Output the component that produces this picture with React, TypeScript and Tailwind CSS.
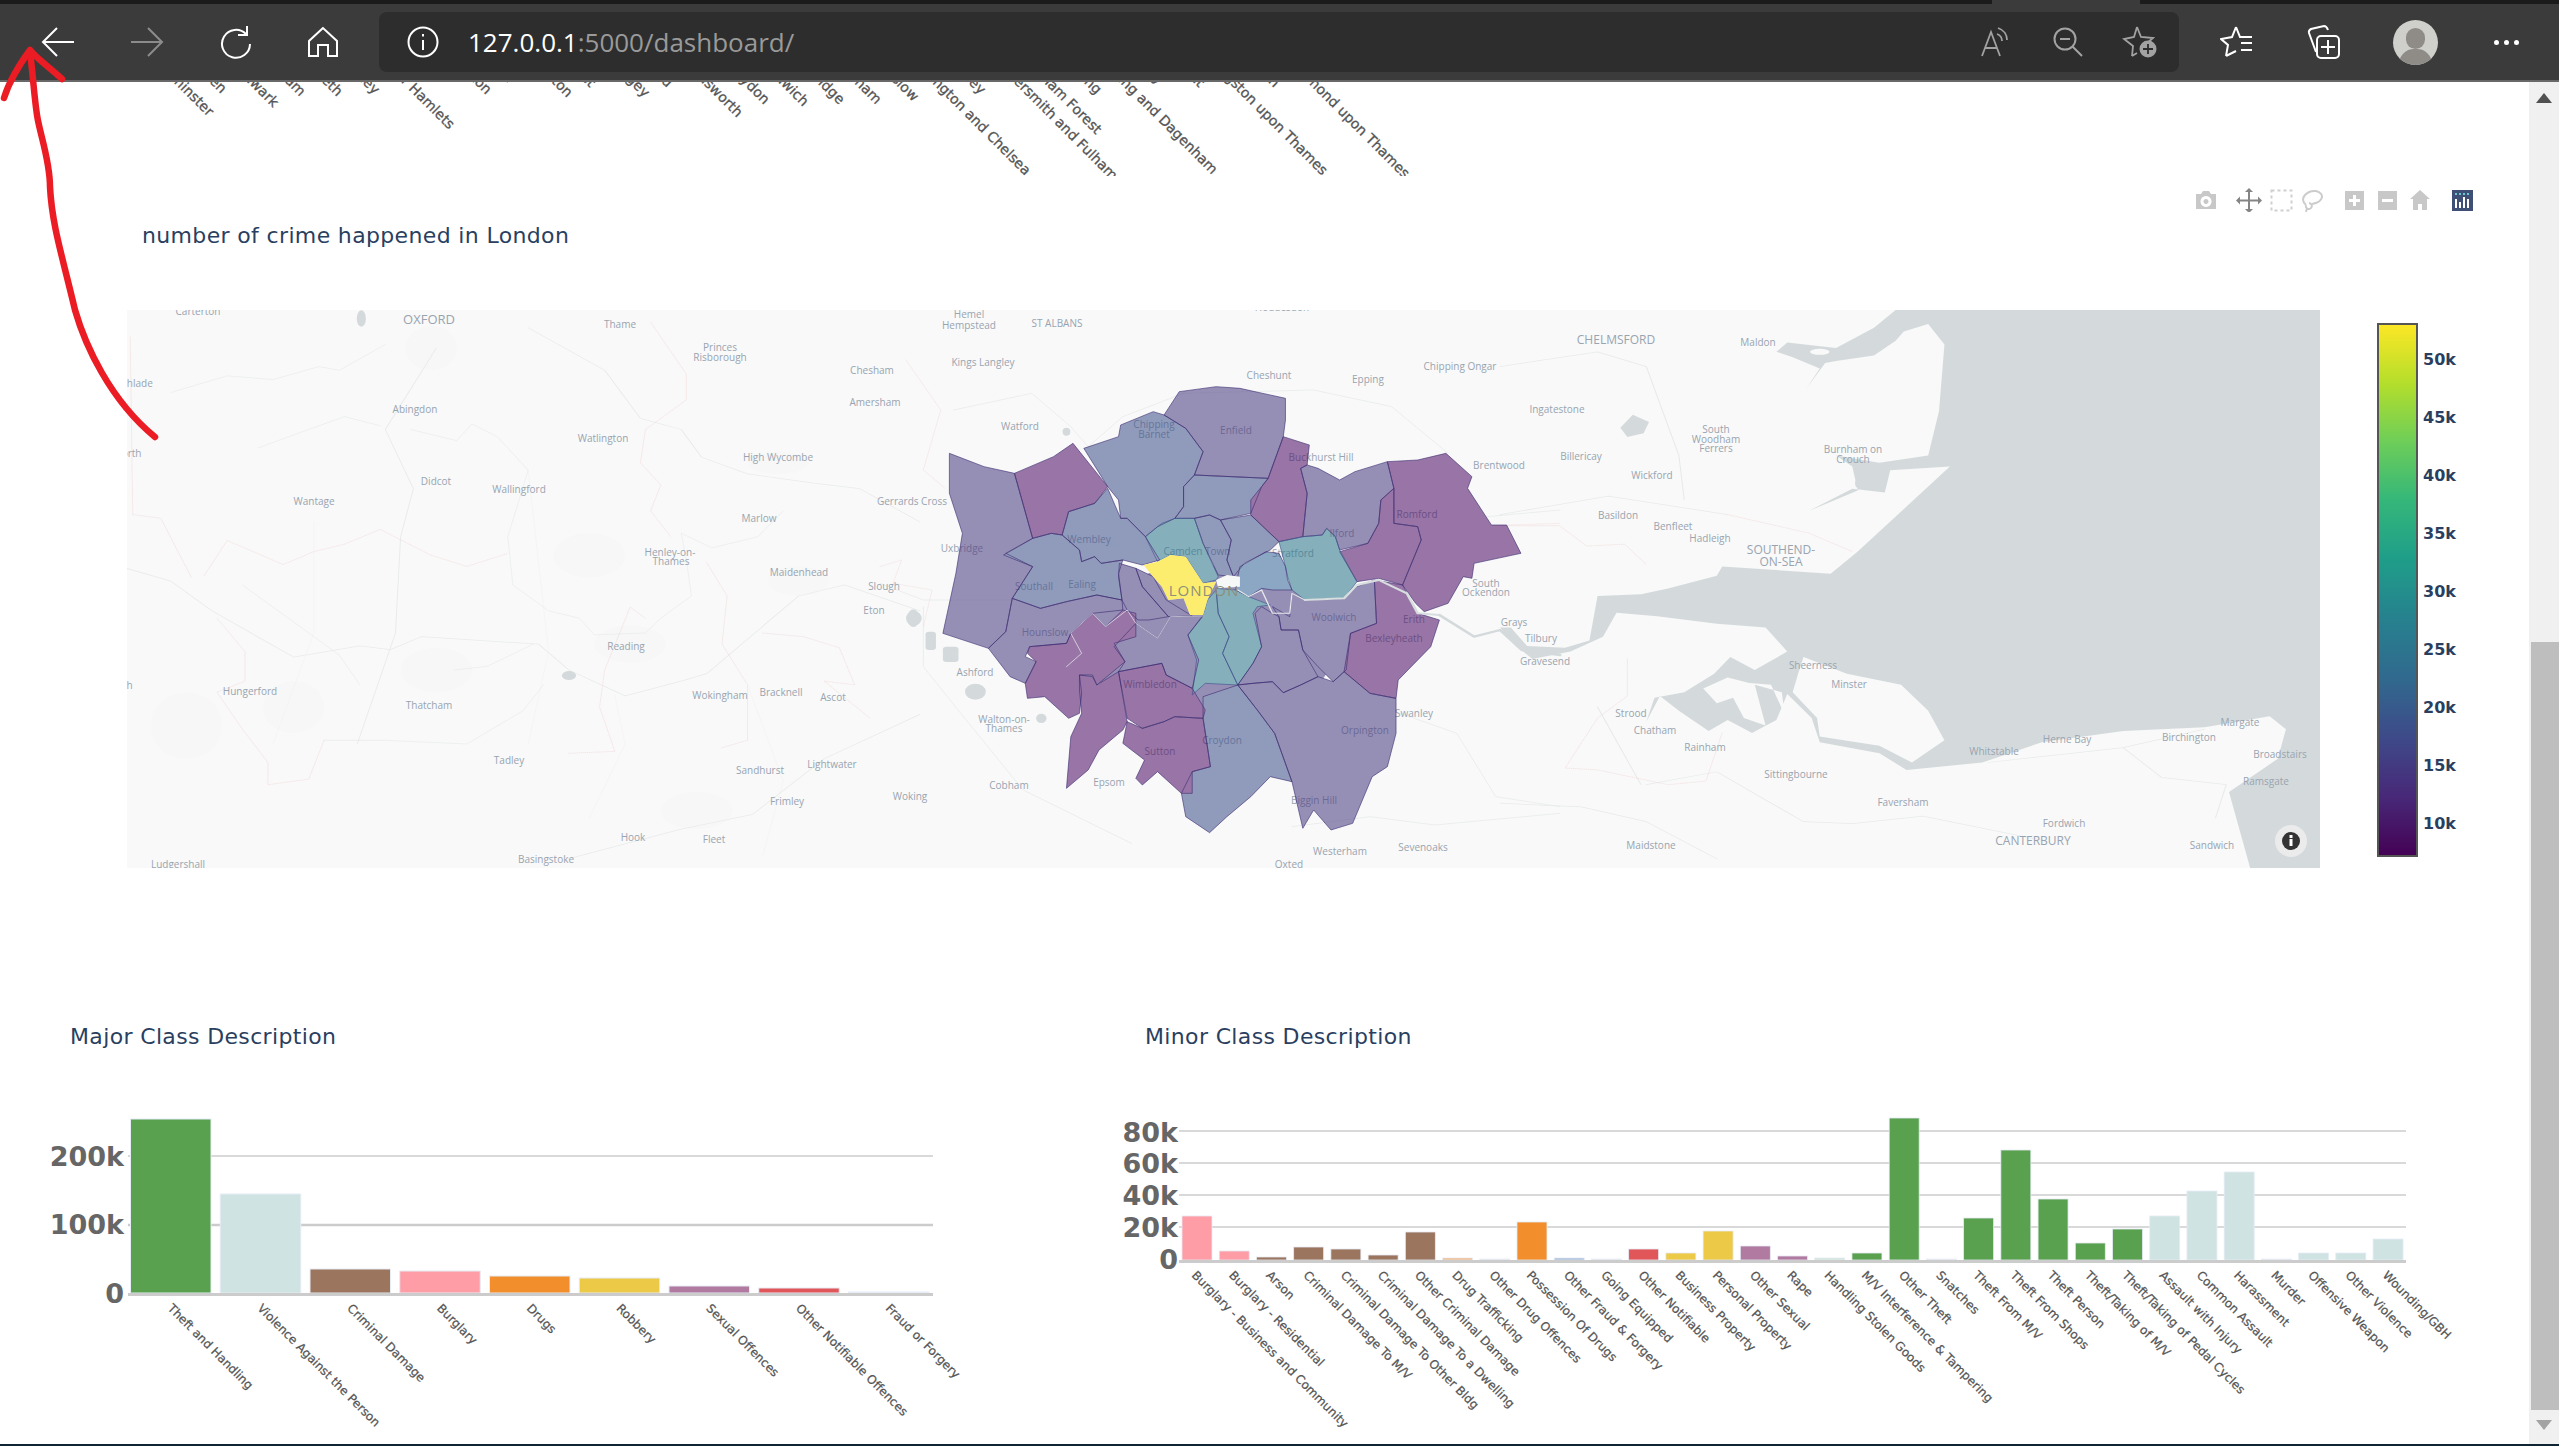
const sansFont = "DejaVu Sans, sans-serif";
const mapFont = "Open Sans, sans-serif";

const PURPLE = '#4a0a63';
const INDIGO = '#46397f';
const SLATE = '#3c4f8a';
const BLUE = '#34659a';
const TEAL = '#26748a';

// polygon points are in the coordinates of the London crop: x = 880 + X / 2.306, y = 360 + Y / 3
const boroughs: [string, string][] = [
    [INDIGO, '160,280 240,320 310,340 352,535 290,580 352,620 305,715 290,815 250,865 145,820 175,640 190,520 160,400'],
    [PURPLE, '310,340 400,290 445,250 525,380 495,430 435,455 420,525 395,520 352,535'],
    [SLATE, '470,265 550,230 555,195 630,155 655,165 705,205 745,275 725,345 700,380 700,440 680,475 640,500 612,530 570,475 555,475 550,420 525,380'],
    [INDIGO, '655,165 690,95 775,80 830,85 935,115 935,180 930,230 895,355 725,345 745,275 705,205'],
    [SLATE, '725,345 895,355 880,380 855,460 785,480 760,465 725,475 680,475 700,440 700,380'],
    [PURPLE, '930,230 990,255 985,315 970,325 985,400 975,530 920,545 855,465 855,420 880,380 895,355'],
    [INDIGO, '985,315 1010,325 1060,360 1095,335 1170,305 1185,385 1155,420 1150,490 1125,550 1060,570 1050,530 1030,505 1020,525 975,530 985,400 970,325'],
    [PURPLE, '1170,305 1240,300 1305,280 1365,350 1355,385 1410,495 1445,495 1478,580 1370,610 1365,655 1345,650 1310,730 1255,755 1235,730 1205,675 1248,540 1240,500 1185,490 1185,385'],
    [PURPLE, '1185,490 1240,500 1248,540 1205,675 1150,655 1100,665 1060,575 1125,550 1150,490 1155,420 1185,385'],
    [TEAL, '920,545 975,530 1020,525 1030,505 1050,530 1060,570 1100,665 1070,715 980,720 950,690 940,650 935,620'],
    [SLATE, '785,480 855,465 920,545 900,570 840,610 815,650 800,600 810,540'],
    [BLUE, '830,620 890,575 920,580 935,620 940,660 950,690 905,690 880,685 850,710 820,690 825,650'],
    [SLATE, '725,475 760,465 785,480 810,540 800,600 815,650 780,645 745,550'],
    [TEAL, '612,530 650,490 680,475 725,475 745,550 780,650 775,660 745,670 705,590 670,585 640,605'],
    [SLATE, '420,525 435,455 495,430 525,385 555,475 570,475 612,530 645,600 605,615 560,600 510,610 495,590 465,605 460,570'],
    [SLATE, '285,585 352,535 395,520 420,525 460,570 465,605 495,590 510,610 560,600 550,640 558,720 500,705 430,725 370,745 305,715 352,620'],
    [INDIGO, '305,715 370,745 430,725 500,705 558,720 560,750 490,760 440,820 430,850 345,860 335,890 360,905 335,970 300,950 250,865 290,815'],
    [INDIGO, '552,610 590,625 605,680 665,770 620,780 595,780 570,750 558,720 550,650'],
    [INDIGO, '590,625 630,650 660,720 720,768 665,770 605,680'],
    [TEAL, '775,685 820,690 850,710 900,735 870,740 860,760 880,860 860,910 825,975 790,880 805,830 780,760'],
    [TEAL, '755,720 775,690 780,760 805,830 790,880 825,975 750,970 720,1005 730,900 710,825 745,765'],
    [INDIGO, '540,860 590,790 640,835 670,770 745,768 710,825 735,900 720,985 660,945 650,910 550,935 565,905'],
    [INDIGO, '865,760 880,740 905,760 920,770 925,810 965,810 975,870 1010,950 970,975 930,998 905,965 860,970 825,975 860,910 880,860'],
    [INDIGO, '905,740 945,770 950,700 980,720 1070,715 1100,680 1140,660 1145,790 1085,820 1075,930 1045,965 1010,920 975,870 965,810 925,810 920,770'],
    [PURPLE, '1140,660 1205,675 1240,760 1290,780 1270,860 1195,960 1190,1015 1130,1000 1070,935 1085,820 1145,790'],
    [INDIGO, '825,975 860,970 905,965 930,998 970,975 1010,950 1045,965 1070,935 1130,1000 1190,1015 1190,1120 1170,1220 1135,1250 1090,1390 1040,1410 1000,1350 975,1405 950,1265 910,1120 870,1050'],
    [SLATE, '745,1010 825,975 870,1050 910,1120 950,1265 900,1250 855,1310 800,1370 760,1418 705,1370 695,1300 720,1235 762,1220 745,1075'],
    [PURPLE, '550,935 650,910 660,945 720,985 750,1050 745,1075 680,1070 655,1085 605,1105 570,1075'],
    [PURPLE, '570,1085 605,1105 655,1085 680,1070 745,1075 762,1220 720,1235 720,1300 695,1300 640,1235 605,1275 590,1255 610,1200 560,1150'],
    [PURPLE, '460,945 490,950 500,975 550,935 570,1085 560,1110 505,1170 480,1230 430,1285 440,1130 465,1060 460,990'],
    [PURPLE, '340,880 345,860 430,850 440,820 490,760 520,800 560,750 590,760 590,830 540,850 565,905 500,975 490,945 460,945 465,1000 460,1060 435,1075 380,1010 340,1015 335,970 360,905'],
];

const WESTMINSTER = '608,615 640,605 670,585 705,590 745,670 775,665 755,720 745,765 715,765 700,715 665,720 650,680 630,650';

const towns: [string, number, number, number?][] = [
    ['Hoddesdon', 1282, 311], ['Carterton', 198, 315], ['OXFORD', 429, 324, 13], ['Thame', 620, 328], ['Princes', 720, 351], ['Risborough', 720, 361],
    ['Hemel', 969, 318], ['Hempstead', 969, 329], ['ST ALBANS', 1057, 327], ['Chesham', 872, 374], ['Amersham', 875, 406], ['Abingdon', 415, 413],
    ['Watlington', 603, 442], ['High Wycombe', 778, 461], ['Didcot', 436, 485], ['Wallingford', 519, 493], ['Wantage', 314, 505], ['Marlow', 759, 522],
    ['Gerrards Cross', 912, 505], ['Henley-on-', 670, 556], ['Thames', 671, 565], ['Maidenhead', 799, 576], ['Slough', 884, 590], ['Eton', 874, 614],
    ['Reading', 626, 650], ['Wokingham', 720, 699], ['Bracknell', 781, 696], ['Ascot', 833, 701], ['Hungerford', 250, 695], ['Thatcham', 429, 709],
    ['Tadley', 509, 764], ['Sandhurst', 760, 774], ['Lightwater', 832, 768], ['Frimley', 787, 805], ['Woking', 910, 800], ['Hook', 633, 841],
    ['Fleet', 714, 843], ['Basingstoke', 546, 863], ['Ludgershall', 178, 868], ['Lechlade', 132, 387], ['Highworth', 117, 457], ['Marlborough', 102, 689],
    ['Kings Langley', 983, 366], ['Cheshunt', 1269, 379], ['Epping', 1368, 383], ['Chipping Ongar', 1460, 370], ['Ingatestone', 1557, 413], ['Watford', 1020, 430],
    ['Chipping', 1154, 428], ['Barnet', 1154, 438], ['Enfield', 1236, 434], ['Buckhurst Hill', 1321, 461], ['Brentwood', 1499, 469], ['Romford', 1417, 518],
    ['Wembley', 1089, 543], ['Ilford', 1342, 537], ['Uxbridge', 962, 552], ['Camden Town', 1197, 555], ['Stratford', 1293, 557], ['South', 1486, 587],
    ['Ockendon', 1486, 596], ['Southall', 1034, 590], ['Ealing', 1082, 588], ['Woolwich', 1334, 621], ['Erith', 1414, 623],
    ['Grays', 1514, 626], ['Tilbury', 1541, 642], ['Hounslow', 1045, 636], ['Bexleyheath', 1394, 642], ['Gravesend', 1545, 665], ['Ashford', 975, 676],
    ['Wimbledon', 1150, 688], ['Swanley', 1414, 717], ['Walton-on-', 1004, 723], ['Thames', 1004, 732], ['Croydon', 1222, 744], ['Orpington', 1365, 734],
    ['Sutton', 1160, 755], ['Cobham', 1009, 789], ['Epsom', 1109, 786], ['Biggin Hill', 1314, 804], ['Sevenoaks', 1423, 851], ['Westerham', 1340, 855],
    ['Oxted', 1289, 868], ['CHELMSFORD', 1616, 344, 12], ['Maldon', 1758, 346], ['South', 1716, 433], ['Woodham', 1716, 443], ['Ferrers', 1716, 452],
    ['Burnham on', 1853, 453], ['Crouch', 1853, 463], ['Billericay', 1581, 460], ['Wickford', 1652, 479], ['Basildon', 1618, 519], ['Benfleet', 1673, 530],
    ['Hadleigh', 1710, 542], ['SOUTHEND-', 1781, 554, 12], ['ON-SEA', 1781, 566, 12], ['Sheerness', 1813, 669], ['Minster', 1849, 688], ['Strood', 1631, 717],
    ['Chatham', 1655, 734], ['Rainham', 1705, 751], ['Margate', 2240, 726], ['Herne Bay', 2067, 743], ['Birchington', 2189, 741], ['Whitstable', 1994, 755],
    ['Broadstairs', 2280, 758], ['Sittingbourne', 1796, 778], ['Ramsgate', 2266, 785], ['Faversham', 1903, 806], ['Fordwich', 2064, 827], ['Maidstone', 1651, 849],
    ['CANTERBURY', 2033, 845, 12], ['Sandwich', 2212, 849],
];

const GREEN = '#59a14f';
const PALE = '#cfe4e2';
const PINK = '#ff9da7';
const BROWN = '#9c755f';
const ORANGE = '#f28e2b';
const YELLOW = '#edc948';
const MAUVE = '#b07aa1';
const RED = '#e15759';

const majorBars: [string, string, number][] = [
    ['Theft and Handling', GREEN, 1119],
    ['Violence Against the Person', PALE, 1194],
    ['Criminal Damage', BROWN, 1269],
    ['Burglary', PINK, 1271],
    ['Drugs', ORANGE, 1276],
    ['Robbery', YELLOW, 1278],
    ['Sexual Offences', MAUVE, 1286],
    ['Other Notifiable Offences', RED, 1288],
    ['Fraud or Forgery', '#dfe6ef', 1292],
];

const minorBars: [string, string, number][] = [
    ['Burglary - Business and Community', PINK, 1216],
    ['Burglary - Residential', PINK, 1251],
    ['Arson', BROWN, 1257],
    ['Criminal Damage To M/V', BROWN, 1247],
    ['Criminal Damage To Other Bldg', BROWN, 1249],
    ['Criminal Damage To a Dwelling', BROWN, 1255],
    ['Other Criminal Damage', BROWN, 1232],
    ['Drug Trafficking', '#f5b478', 1258],
    ['Other Drug Offences', '#e6e6e6', 1259],
    ['Possession Of Drugs', ORANGE, 1222],
    ['Other Fraud & Forgery', '#a0b8d8', 1258],
    ['Going Equipped', '#e6e6e6', 1259],
    ['Other Notifiable', RED, 1249],
    ['Business Property', YELLOW, 1253],
    ['Personal Property', YELLOW, 1231],
    ['Other Sexual', MAUVE, 1246],
    ['Rape', MAUVE, 1256],
    ['Handling Stolen Goods', '#cfe5d5', 1258],
    ['M/V Interference & Tampering', GREEN, 1253],
    ['Other Theft', GREEN, 1118],
    ['Snatches', '#e6e6e6', 1259],
    ['Theft From M/V', GREEN, 1218],
    ['Theft From Shops', GREEN, 1150],
    ['Theft Person', GREEN, 1199],
    ['Theft/Taking of M/V', GREEN, 1243],
    ['Theft/Taking of Pedal Cycles', GREEN, 1229],
    ['Assault with Injury', PALE, 1216],
    ['Common Assault', PALE, 1191],
    ['Harassment', PALE, 1172],
    ['Murder', '#e6e6e6', 1259],
    ['Offensive Weapon', PALE, 1253],
    ['Other Violence', PALE, 1253],
    ['Wounding/GBH', PALE, 1239],
];

// the tail of the chart above, cut off by the toolbar
const cutLabels: [string, number, number][] = [
    ['Westminster', 208, 117], ['Camden', 221, 94], ['Southwark', 273, 108], ['Newham', 300, 97], ['Lambeth', 337, 97], ['Hackney', 374, 95],
    ['Tower Hamlets', 449, 130], ['Merton', 486, 95], ['Harrow', 509, 84], ['Islington', 567, 98], ['Barnet', 590, 88], ['Haringey', 644, 98],
    ['Enfield', 667, 88], ['Wandsworth', 737, 118], ['Croydon', 764, 105], ['Greenwich', 803, 107], ['Redbridge', 839, 105], ['Lewisham', 876, 105],
    ['Hounslow', 913, 102], ['Bexley', 980, 95], ['Kensington and Chelsea', 1025, 176], ['Hammersmith and Fulham', 1112, 181], ['Waltham Forest', 1096, 135],
    ['Havering', 1096, 95], ['Bromley', 1158, 85], ['Barking and Dagenham', 1212, 175], ['Brent', 1199, 88], ['Sutton', 1274, 88],
    ['Kingston upon Thames', 1322, 176], ['Richmond upon Thames', 1404, 179],
];

const LINE_PROPS = { fill: 'none', vectorEffect: 'non-scaling-stroke' as const, strokeLinecap: 'round' as const, strokeLinejoin: 'round' as const };

const WestRoads = () => (
    <g transform="translate(120 300) scale(0.5102 0.37)">
        <g fill="#f7f7f7">
            <ellipse cx="1000" cy="930" rx="70" ry="50" />
            <ellipse cx="1330" cy="760" rx="60" ry="40" />
            <ellipse cx="1290" cy="440" rx="60" ry="30" />
            <ellipse cx="610" cy="130" rx="50" ry="60" />
            <ellipse cx="920" cy="690" rx="70" ry="60" />
            <ellipse cx="130" cy="1150" rx="70" ry="90" />
            <ellipse cx="340" cy="1100" rx="60" ry="70" />
            <ellipse cx="620" cy="1000" rx="70" ry="60" />
            <ellipse cx="1130" cy="1380" rx="70" ry="50" />
        </g>
        <g {...LINE_PROPS} stroke="#e9ebeb" strokeWidth={2}>
            <path d="M12 725 L100 760 180 840 340 965 470 935 530 945 590 910 820 930 880 1000 990 1070 1100 1030 1150 1010 1330 800 1420 770 1568 840" />
            <path d="M800 75 L950 190 1020 320 1100 350 1140 425 1230 470 1360 495 1450 510 1568 600" />
            <path d="M620 130 L520 350 575 510 550 640 540 900 465 1200" />
            <path d="M880 1510 L1100 1430 1240 1390 1380 1240 1568 1120" />
        </g>
        <g {...LINE_PROPS} stroke="#e3e7e9" strokeWidth={1.2}>
            <path d="M100 250 L210 205 300 215 390 180 430 190 520 120" />
            <path d="M270 400 L370 350 440 315 510 340" />
            <path d="M570 350 L660 380 690 335 740 370 800 460 760 640 770 770 840 840 900 860 930 905 1030 900 1060 860 1120 800 1110 700 1100 630 1160 670 1250 640 1300 570" />
            <path d="M240 770 L350 880 430 960 470 1040" />
            <path d="M655 1000 L720 990 810 930" />
            <path d="M400 1190 L520 1190 680 1200 790 1110 830 1040" />
        </g>
        <g {...LINE_PROPS} stroke="#f2eeee" strokeWidth={1}>
            <path d="M1230 1040 L1300 1300 1260 1500" />
            <path d="M380 600 L380 900 300 1200" />
            <path d="M800 460 L840 950 800 1200" />
            <path d="M970 1070 L990 1200 920 1400" />
        </g>
        <g {...LINE_PROPS} stroke="#efcfcf" strokeWidth={1} strokeDasharray="1.5 2.5">
            <path d="M20 100 L25 580 80 590 140 750" />
            <path d="M165 745 L210 650 320 715 380 680 440 660 510 620 610 690 680 720 760 685" />
            <path d="M190 860 L245 950 245 1030 190 1060 240 1160 290 1250 290 1310 370 1295 400 1190" />
            <path d="M1040 60 L1110 200 1110 270 1030 350 1020 440 1060 500 1040 570 1080 640" />
            <path d="M880 1225 L970 1220 940 1100 950 1000 1000 830 1030 860" />
            <path d="M1150 710 L1190 800 1180 930 1230 1040 1230 1190 1180 1210" />
            <path d="M1260 900 L1340 910 1410 940 1440 1040 1380 1030 1470 1130" />
        </g>
        <g fill="#d4dadc">
            <ellipse cx="473" cy="50" rx="9" ry="22" />
            <ellipse cx="1555" cy="860" rx="12" ry="24" />
            <ellipse cx="880" cy="1015" rx="14" ry="12" />
        </g>
    </g>
);

const CentralRoads = () => (
    <g transform="translate(880 360) scale(0.43365 0.33333)">
        <g {...LINE_PROPS} stroke="#e8eaea" strokeWidth={2}>
            <path d="M170 150 L350 100 440 200 480 260 560 170 700 100 1000 90 1180 140 1310 280" />
            <path d="M100 740 L100 920 180 1050 330 1290 580 1450" />
            <path d="M0 670 L100 720 300 720" />
            <path d="M1200 1060 L1330 1120 1420 1310 1568 1340" />
            <path d="M1400 470 L1568 450" />
            <path d="M950 1400 L1130 1370 1280 1395 1568 1360" />
        </g>
        <g {...LINE_PROPS} stroke="#efcfcf" strokeWidth={1} strokeDasharray="1.5 2.5">
            <path d="M60 0 L140 150 100 330 150 385" />
            <path d="M0 620 L50 600 30 670 120 690 100 800" />
            <path d="M1450 495 L1568 490" />
        </g>
        <g fill="#d4dadc">
            <ellipse cx="78" cy="775" rx="18" ry="22" />
            <rect x="105" y="815" width="24" height="55" rx="8" />
            <rect x="145" y="860" width="36" height="46" rx="8" />
            <ellipse cx="220" cy="995" rx="24" ry="24" />
            <ellipse cx="372" cy="1075" rx="12" ry="14" />
            <ellipse cx="430" cy="215" rx="9" ry="12" />
        </g>
    </g>
);

// sea, estuary and Medway, in the coordinates of the east crop
const EastCoast = () => (
    <g transform="translate(1500 300) scale(0.542 0.37)">
        <g {...LINE_PROPS} stroke="#e8eaea" strokeWidth={2}>
            <path d="M0 1360 L150 1370 270 1410 400 1510" />
            <path d="M270 1310 L400 1275 560 1410 650 1415 780 1395 1000 1460" />
            <path d="M0 180 L180 140 270 180 330 420 340 540" />
            <path d="M0 580 L200 530 420 580" />
            <path d="M180 1100 L260 1310" />
            <path d="M1150 1210 L1220 1290 1340 1310 1320 1400" />
            <path d="M900 1250 L1150 1210 1300 1160" />
        </g>
        <g {...LINE_PROPS} stroke="#efcfcf" strokeWidth={1} strokeDasharray="1.5 2.5">
            <path d="M0 610 L110 610 160 665 230 660 270 715" />
            <path d="M420 580 L570 630 650 680" />
            <path d="M235 970 L235 1070 180 1130 120 1265 180 1270 310 1310 380 1300 410 1170" />
        </g>
        <polygon
            fill="#d4dadc"
            points="730,27 1513,27 1513,1540 1385,1540 1345,1330 1435,1240 1450,1160 1420,1125 1300,1155 1150,1165 1000,1195 890,1250 750,1270 700,1225 590,1195 575,1130 530,1065 510,1135 465,1170 420,1135 385,1165 330,1110 295,1070 270,1140 285,1075 340,1060 395,1010 425,965 470,1000 530,950 490,885 400,875 290,855 215,845 190,910 130,950 60,970 25,930 0,885 20,885 50,935 120,940 165,920 180,800 260,795 310,780 400,745 410,720 610,740 660,680 830,450 720,460 710,520 650,510 570,570 660,515 650,450 620,420 700,440 790,420 810,300 820,120 790,65 745,85 730,110 690,150 620,165 600,170 565,240 590,185 540,155 510,140 530,115 620,130 690,75"
        />
        <g fill="#f9f9f9">
            <polygon points="560,965 640,1010 740,1040 790,1110 820,1190 760,1250 700,1205 590,1180 585,1130 540,1060 550,1010" />
            <polygon points="375,1050 400,1090 430,1075 450,1130 490,1150 470,1040 520,1060 525,1120 500,1040 460,1035 420,1020" />
            <ellipse cx="590" cy="140" rx="18" ry="8" />
        </g>
        <g fill="#d4dadc">
            <polygon points="245,310 275,330 265,360 235,370 222,345" />
            <ellipse cx="665" cy="495" rx="10" ry="16" />
        </g>
    </g>
);

const MapPlot = () => (
    <svg viewBox="127 310 2193 558" className="w-[2193px] h-[558px] shrink-0 bg-[#f9f9f9]">
        <WestRoads />
        <CentralRoads />
        <EastCoast />
        {towns.map(([name, x, y, size], i) => (
            <text key={i} x={x} y={y} textAnchor="middle" fontFamily={mapFont} fontSize={size ?? 10} fill="#98a4b0">
                {name}
            </text>
        ))}
        <g transform="translate(880 360) scale(0.43365 0.33333)">
            <g opacity={0.55}>
                <polygon points="300,800 500,700 700,600 900,650 1100,800 1000,1000 800,1050 600,1000 450,950" fill={INDIGO} />
                {boroughs.map(([colour, points], i) => (
                    <polygon key={i} points={points} fill={colour} />
                ))}
            </g>
            {boroughs.map(([colour, points], i) => (
                <polygon
                    key={i}
                    points={points}
                    fill="none"
                    stroke={colour === TEAL ? SLATE : '#3a2a70'}
                    strokeOpacity={0.75}
                    strokeWidth={0.8}
                    vectorEffect="non-scaling-stroke"
                />
            ))}
            <polygon points={WESTMINSTER} fill="#f9f9f9" />
            <polygon points={WESTMINSTER} fill="#fde725" fillOpacity={0.65} />
            <polygon points="775,660 800,645 830,650 830,680 780,685" fill="#f6f8f8" />
            <g {...LINE_PROPS}>
                <path d="M430 920 L465 880 440 820 490 760 520 800 570 750 590 790 640 835 670 770 745,768" stroke="#eef0f1" strokeWidth={1.8} />
                <path d="M825 690 L850 710 880 690 905 760 945 760 950 700 980 720" stroke="#e6e9ea" strokeWidth={3} />
                <path d="M980 720 L1070 715 1100 675 1150 660 1215 700 1240 760 1290 765" stroke="#d8dddf" strokeWidth={6} />
                <path d="M1290 765 L1370 830 1430 810 1480 870 1568 885" stroke="#d4dadc" strokeWidth={7} />
            </g>
        </g>
        <text x={1204} y={596} textAnchor="middle" fontFamily={mapFont} fontSize={15} letterSpacing={1} fill="#8e8f7a">
            LONDON
        </text>
        <circle cx={2291} cy={841} r={16} fill="#ebebeb" />
        <circle cx={2291} cy={841} r={9} fill="#333333" />
        <rect x={2289.5} y={839} width={3} height={7} fill="#ffffff" />
        <rect x={2289.5} y={835} width={3} height={3} fill="#ffffff" />
    </svg>
);

const ColourBar = () => {
    const ticks = ['50k', '45k', '40k', '35k', '30k', '25k', '20k', '15k', '10k'];
    return (
        <svg viewBox="2377 323 110 535" className="w-[110px] h-[535px] ml-[57px] mt-[13px] shrink-0">
            <defs>
                <linearGradient id="viridis" x1="0" y1="0" x2="0" y2="1">
                    <stop offset="0" stopColor="#fde725" />
                    <stop offset="0.11" stopColor="#b5de2b" />
                    <stop offset="0.22" stopColor="#6ece58" />
                    <stop offset="0.33" stopColor="#35b779" />
                    <stop offset="0.44" stopColor="#1f9e89" />
                    <stop offset="0.55" stopColor="#26828e" />
                    <stop offset="0.67" stopColor="#31688e" />
                    <stop offset="0.78" stopColor="#3e4989" />
                    <stop offset="0.89" stopColor="#482878" />
                    <stop offset="1" stopColor="#440154" />
                </linearGradient>
            </defs>
            <rect x={2378} y={324} width={39} height={532} fill="url(#viridis)" stroke="#555555" strokeWidth={2} />
            {ticks.map((tick, i) => (
                <text key={tick} x={2423} y={365 + i * 58} fontFamily={sansFont} fontWeight={700} fontSize={16} fill="#2a3f5f">
                    {tick}
                </text>
            ))}
        </svg>
    );
};

const AxisLabel = ({ x, y, children }: { x: number; y: number; children: string }) => (
    <text x={x} y={y} textAnchor="end" fontFamily={sansFont} fontWeight={700} fontSize={27} fill="#666666">
        {children}
    </text>
);

const TickLabel = ({ x, y, children }: { x: number; y: number; children: string }) => (
    <text
        x={x}
        y={y}
        transform={`rotate(45 ${x} ${y})`}
        fontFamily={sansFont}
        fontSize={12}
        fill="#555555"
        stroke="#555555"
        strokeWidth={0.25}
    >
        {children}
    </text>
);

const MajorChart = () => (
    <svg viewBox="0 1072 1075 372" className="w-[1075px] h-[372px]">
        <line x1={128} x2={933} y1={1156} y2={1156} stroke="#cccccc" strokeWidth={1.5} />
        <line x1={128} x2={933} y1={1225} y2={1225} stroke="#cccccc" strokeWidth={2.5} />
        {majorBars.map(([name, colour, top], i) => (
            <rect key={name} x={130.5 + i * 89.75} y={top} width={80.5} height={1293 - top} fill={colour} stroke="#e5ecf6" />
        ))}
        <line x1={128} x2={933} y1={1294.5} y2={1294.5} stroke="#cccccc" strokeWidth={3} />
        <AxisLabel x={124} y={1166}>200k</AxisLabel>
        <AxisLabel x={124} y={1234}>100k</AxisLabel>
        <AxisLabel x={124} y={1303}>0</AxisLabel>
        {majorBars.map(([name], i) => (
            <TickLabel key={name} x={167 + i * 89.75} y={1309}>{name}</TickLabel>
        ))}
    </svg>
);

const MinorChart = () => (
    <svg viewBox="1075 1072 1455 372" className="w-[1455px] h-[372px]">
        {[1131, 1163, 1195, 1227].map((y) => (
            <line key={y} x1={1179} x2={2406} y1={y} y2={y} stroke="#cccccc" strokeWidth={1.5} />
        ))}
        {minorBars.map(([name, colour, top], i) => (
            <rect key={name} x={1182 + i * 37.22} y={top} width={30} height={1260 - top} fill={colour} stroke="#e5ecf6" strokeWidth={0.8} />
        ))}
        <line x1={1179} x2={2406} y1={1261.5} y2={1261.5} stroke="#cccccc" strokeWidth={3} />
        <AxisLabel x={1178} y={1142}>80k</AxisLabel>
        <AxisLabel x={1178} y={1173}>60k</AxisLabel>
        <AxisLabel x={1178} y={1205}>40k</AxisLabel>
        <AxisLabel x={1178} y={1237}>20k</AxisLabel>
        <AxisLabel x={1178} y={1269}>0</AxisLabel>
        {minorBars.map(([name], i) => (
            <TickLabel key={name} x={1191 + i * 37.22} y={1276}>{name}</TickLabel>
        ))}
    </svg>
);

const CutLabels = () => (
    <svg viewBox="0 82 1500 94" className="w-[1500px] h-[94px] shrink-0">
        {cutLabels.map(([name, x, y]) => (
            <text
                key={name}
                x={x}
                y={y}
                textAnchor="end"
                transform={`rotate(45 ${x} ${y})`}
                fontFamily={sansFont}
                fontSize={14}
                fill="#555555"
                stroke="#555555"
                strokeWidth={0.3}
            >
                {name}
            </text>
        ))}
    </svg>
);

const ModeBar = () => (
    <svg viewBox="2195 188 280 24" className="absolute left-[2195px] top-[12px] w-[280px] h-[24px]">
        <g fill="#c8c8c8">
            <path fillRule="evenodd" d="M2196 194 h5 l2 -3 h6 l2 3 h5 v15 h-20 Z M2206 196 a5.5 5.5 0 1 0 0.01 0 Z M2206 199 a2.5 2.5 0 1 1 -0.01 0 Z" />
            <rect x="2345" y="191" width="19" height="19" />
            <rect x="2378" y="191" width="19" height="19" />
            <path d="M2420 190 l10 9 h-3 v11 h-5 v-6 h-4 v6 h-5 v-11 h-3 Z" />
        </g>
        <path stroke="#ffffff" strokeWidth={3} d="M2349 200.500 h11 M2354.500 195 v11 M2382 200.500 h11" fill="none" />
        <path stroke="#858585" strokeWidth={2} fill="none" d="M2249 190 v21 M2238 200.500 h22" />
        <path fill="#858585" d="M2249 188 l4 4 h-8 Z M2249 213 l4 -4 h-8 Z M2236 200.500 l4 -4 v8 Z M2262 200.500 l-4 -4 v8 Z" />
        <rect x="2271.500" y="190.500" width="20" height="20" fill="none" stroke="#cfcfcf" strokeWidth={2} strokeDasharray="3 3" />
        <path fill="none" stroke="#cccccc" strokeWidth={2} d="M2306 205 C2298 198 2308 190 2316 191 C2325 193 2324 202 2312 204 M2306 205 a3 3 0 1 0 3 -2 M2307 208 l-1 4" />
        <rect x="2452" y="190" width="21" height="21" fill="#3f4f75" />
        <g fill="#ffffff">
            <rect x="2455" y="199" width="2" height="9" />
            <rect x="2459" y="202" width="2" height="6" />
            <rect x="2463" y="197" width="2" height="11" />
            <rect x="2467" y="199" width="2" height="9" />
        </g>
        <g fill="#69c7cf">
            <rect x="2455" y="193" width="2" height="2" />
            <rect x="2459" y="193" width="2" height="2" />
            <rect x="2463" y="193" width="2" height="2" />
            <rect x="2467" y="193" width="2" height="2" />
        </g>
    </svg>
);

const Toolbar = () => (
    <div className="h-[82px] shrink-0 bg-[#3b3b3b] border-b-2 border-[#686868] relative flex items-center pt-[4px]">
        <div className="absolute left-0 top-0 w-[1992px] h-[4px] bg-[#1b1b1b]" />
        <div className="absolute left-[2140px] right-0 top-0 h-[4px] bg-[#1b1b1b]" />
        <div className="flex items-center pl-[14px]">
            <div className="w-[88px] flex justify-center">
                <svg viewBox="0 0 34 30" className="w-[34px] h-[30px]" fill="none" stroke="#ffffff" strokeWidth={2}>
                    <path d="M33 15 H2 M16 1 L2 15 L16 29" />
                </svg>
            </div>
            <div className="w-[90px] flex justify-center">
                <svg viewBox="0 0 34 30" className="w-[34px] h-[30px]" fill="none" stroke="#8c8c8c" strokeWidth={2}>
                    <path d="M1 15 H32 M18 1 L32 15 L18 29" />
                </svg>
            </div>
            <div className="w-[88px] flex justify-center">
                <svg viewBox="0 0 32 34" className="w-[32px] h-[34px]" fill="none" stroke="#ffffff" strokeWidth={2}>
                    <path d="M26 9 A14 14 0 1 0 30 19 M27 1 V10 H18" />
                </svg>
            </div>
            <div className="w-[86px] flex justify-center">
                <svg viewBox="0 0 32 32" className="w-[32px] h-[32px]" fill="none" stroke="#ffffff" strokeWidth={2}>
                    <path d="M16 2 L2 15 V30 H11 V19 H21 V30 H30 V15 Z" />
                </svg>
            </div>
        </div>
        <div className="w-[1800px] h-[60px] ml-[13px] rounded-[8px] bg-[#2d2d2d] flex items-center pl-[28px] pr-[3px]">
            <svg viewBox="0 0 32 32" className="w-[32px] h-[32px]" fill="none" stroke="#ffffff" strokeWidth={2}>
                <circle cx="16" cy="16" r="14.500" />
                <path d="M16 14 V24 M16 8 V10.500" />
            </svg>
            <div className="ml-[29px] font-['Open_Sans'] text-[26px] text-white">
                127.0.0.1<span className="text-[#9a9a9a]">:5000/dashboard/</span>
            </div>
            <div className="ml-auto flex items-center">
                <div className="w-[72px] flex justify-center">
                    <svg viewBox="0 0 32 30" className="w-[32px] h-[30px]" fill="none" stroke="#a2a2a2" strokeWidth={1.8}>
                        <path d="M2 29 L11 5 L20 29 M5 21 H17 M18 1 C24 3 27 8 27 13 M17 7 C20 8 22 11 22 14" />
                    </svg>
                </div>
                <div className="w-[72px] flex justify-center">
                    <svg viewBox="0 0 30 30" className="w-[30px] h-[30px]" fill="none" stroke="#a2a2a2" strokeWidth={2}>
                        <circle cx="12" cy="12" r="10.500" />
                        <path d="M7 12 H17 M19.500 19.500 L29 29" />
                    </svg>
                </div>
                <div className="w-[72px] flex justify-center">
                    <svg viewBox="0 0 36 32" className="w-[36px] h-[32px]" fill="none" stroke="#a2a2a2" strokeWidth={1.8}>
                        <path d="M15 1 L19 11 L31 12 L24 18 M10 30 L11 20 L2 13 L12 11 L15 1 M10 30 L15 27" />
                        <circle cx="26" cy="23" r="8.500" fill="#a2a2a2" stroke="none" />
                        <path d="M26 18 V28 M21 23 H31" stroke="#2d2d2d" />
                    </svg>
                </div>
            </div>
        </div>
        <svg viewBox="0 0 34 32" className="w-[34px] h-[32px] ml-[41px]" fill="none" stroke="#ffffff" strokeWidth={2}>
            <path d="M16 1 L20 11 H32 M6 30 L8 19 L1 13 L12 11 L16 1 M6 30 L16 25 M21 17 H32 M21 24 H32" />
        </svg>
        <svg viewBox="0 0 34 34" className="w-[34px] h-[34px] ml-[53px]" fill="none" stroke="#ffffff" strokeWidth={2}>
            <path d="M9 27 L2 8 C1.500 6 2 5 4 4 L17 1 C19 1 20 2 21 5" />
            <rect x="10" y="11" width="22" height="22" rx="4" />
            <path d="M21 15 V29 M14 22 H28" />
        </svg>
        <div className="w-[45px] h-[45px] ml-[52px] rounded-full bg-[#cfcfcb] relative overflow-hidden">
            <div className="absolute left-[13px] top-[8px] w-[19px] h-[21px] rounded-full bg-[#8f8c88]" />
            <div className="absolute left-[6px] top-[29px] w-[33px] h-[30px] rounded-full bg-[#8f8c88]" />
        </div>
        <div className="ml-[56px] flex gap-[5px]">
            <div className="w-[5px] h-[5px] rounded-full bg-white" />
            <div className="w-[5px] h-[5px] rounded-full bg-white" />
            <div className="w-[5px] h-[5px] rounded-full bg-white" />
        </div>
    </div>
);

const ScrollBar = () => (
    <div className="w-[30px] shrink-0 bg-[#f0f0f0] flex flex-col items-end">
        <div className="h-[560px] w-full flex justify-center pt-[11px]">
            <svg viewBox="0 0 16 10" className="w-[16px] h-[10px]">
                <path d="M8 0 L16 10 H0 Z" fill="#505050" />
            </svg>
        </div>
        <div className="h-[768px] w-[28px] bg-[#bebebe]" />
        <div className="flex-1 w-full flex justify-center pt-[10px]">
            <svg viewBox="0 0 16 10" className="w-[16px] h-[10px]">
                <path d="M8 10 L16 0 H0 Z" fill="#a3a3a3" />
            </svg>
        </div>
    </div>
);

const ChartTitle = ({ children }: { children: string }) => (
    <div className="h-[72px] pl-[70px] flex items-center font-['DejaVu_Sans'] text-[22px] tracking-[0.35px] text-[#2a3f5f]">{children}</div>
);

const Arrow = () => (
    <svg viewBox="0 0 170 450" className="absolute left-0 top-0 w-[170px] h-[450px]" fill="none" stroke="#ec1c24" strokeWidth={6.5} strokeLinecap="round" strokeLinejoin="round">
        <path d="M30 52 C33 75 34 95 37 115 C40 135 50 160 50 187 C52 225 62 255 75 310 C85 345 110 400 155 437" />
        <path d="M4 98 C8 85 14 72 30 50 C36 58 48 66 62 79" />
    </svg>
);

const App = (): JSX.Element => {
    return (
        <div className="w-[2559px] h-[1446px] overflow-hidden relative flex flex-col bg-white">
            <Toolbar />
            <div className="h-[1364px] flex border-b-2 border-[#0f2533]">
                <div className="flex-1 min-w-0 flex flex-col overflow-hidden">
                    <CutLabels />
                    <div className="h-[134px] relative shrink-0 pl-[142px] pt-[43px] font-['DejaVu_Sans'] text-[22px] tracking-[0.35px] text-[#2a3f5f]">
                        number of crime happened in London
                        <ModeBar />
                    </div>
                    <div className="flex pl-[127px] shrink-0">
                        <MapPlot />
                        <ColourBar />
                    </div>
                    <div className="flex mt-[132px]">
                        <div className="w-[1075px] shrink-0">
                            <ChartTitle>Major Class Description</ChartTitle>
                            <MajorChart />
                        </div>
                        <div className="w-[1454px] shrink-0">
                            <ChartTitle>Minor Class Description</ChartTitle>
                            <MinorChart />
                        </div>
                    </div>
                </div>
                <ScrollBar />
            </div>
            <Arrow />
        </div>
    );
};

export default App;
